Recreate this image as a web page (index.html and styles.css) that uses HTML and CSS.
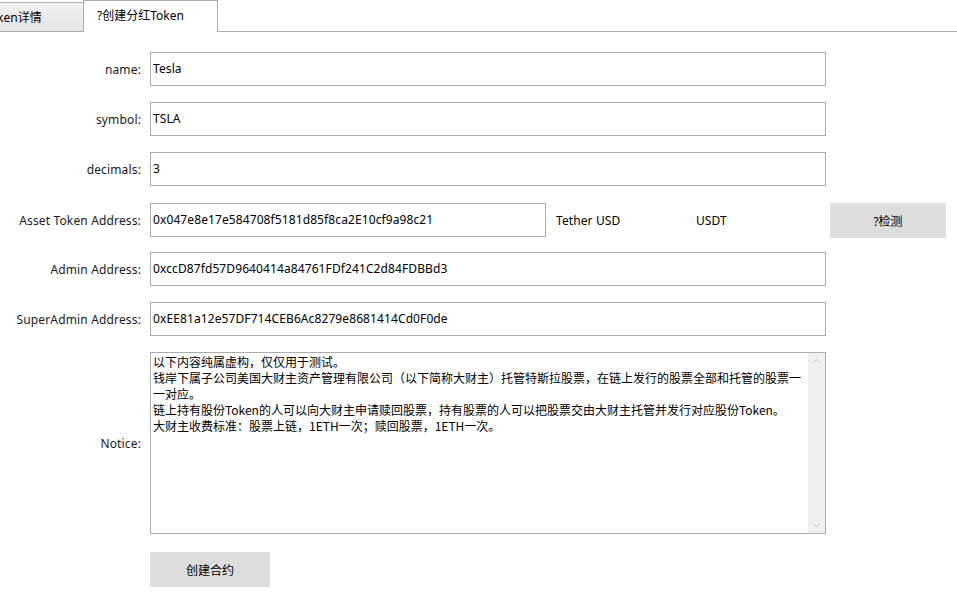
FILE: index.html
```html
<!DOCTYPE html>
<html lang="zh">
<head>
<meta charset="utf-8">
<title>创建分红Token</title>
<link rel="stylesheet" href="styles.css">
</head>
<body>
<div class="tabbar">
  <div class="tab tab-inactive">Token详情</div>
  <div class="tab tab-active">?创建分红Token</div>
  <div class="tab-rest"></div>
</div>
<div class="form">
  <div class="row">
    <label class="lbl">name:</label>
    <div class="field">Tesla</div>
  </div>
  <div class="row">
    <label class="lbl">symbol:</label>
    <div class="field">TSLA</div>
  </div>
  <div class="row">
    <label class="lbl">decimals:</label>
    <div class="field">3</div>
  </div>
  <div class="row">
    <label class="lbl">Asset Token Address:</label>
    <div class="asset">
      <div class="field field-short">0x047e8e17e584708f5181d85f8ca2E10cf9a98c21</div>
      <span class="info info-name">Tether USD</span>
      <span class="info info-sym">USDT</span>
      <button class="btn btn-check">?检测</button>
    </div>
  </div>
  <div class="row">
    <label class="lbl">Admin Address:</label>
    <div class="field">0xccD87fd57D9640414a84761FDf241C2d84FDBBd3</div>
  </div>
  <div class="row">
    <label class="lbl">SuperAdmin Address:</label>
    <div class="field">0xEE81a12e57DF714CEB6Ac8279e8681414Cd0F0de</div>
  </div>
  <div class="row row-notice">
    <label class="lbl">Notice:</label>
    <div class="notice">
      <div class="notice-text">以下内容纯属虚构，仅仅用于测试。
钱岸下属子公司美国大财主资产管理有限公司（以下简称大财主）托管特斯拉股票，在链上发行的股票全部和托管的股票一一对应。
链上持有股份Token的人可以向大财主申请赎回股票，持有股票的人可以把股票交由大财主托管并发行对应股份Token。
大财主收费标准：股票上链，1ETH一次；赎回股票，1ETH一次。</div>
      <div class="scrollbar">
        <svg class="arrow" width="17" height="17" viewBox="0 0 17 17"><path d="M5 10 L8.5 6.5 L12 10" fill="none" stroke="#c8c8c8" stroke-width="1"/></svg>
        <svg class="arrow" width="17" height="17" viewBox="0 0 17 17"><path d="M5 7 L8.5 10.5 L12 7" fill="none" stroke="#c8c8c8" stroke-width="1"/></svg>
      </div>
    </div>
  </div>
  <div class="row row-submit">
    <span></span>
    <button class="btn btn-create">创建合约</button>
  </div>
</div>
</body>
</html>
```

FILE: styles.css
```css
html, body {
  margin: 0;
  padding: 0;
  background: #ffffff;
}
body {
  width: 957px;
  height: 610px;
  overflow: hidden;
  font-family: "Noto Sans", "Noto Sans CJK SC", sans-serif;
  font-size: 12px;
  color: #000000;
}
.tabbar {
  display: flex;
  align-items: flex-end;
  height: 32px;
}
.tab {
  box-sizing: border-box;
  line-height: 28px;
  white-space: nowrap;
}
.tab-inactive {
  margin-left: -30px;
  width: 114px;
  height: 30px;
  padding-left: 13px;
  background: linear-gradient(#f2f2f2, #e3e3e3);
  border: 1px solid #acacac;
  line-height: 28px;
  padding-top: 1px;
}
.tab-active {
  width: 135px;
  height: 32px;
  padding-left: 13px;
  padding-top: 1px;
  background: #ffffff;
  border: 1px solid #acacac;
  border-bottom: none;
  line-height: 28px;
  margin-left: -1px;
}
.tab-rest {
  flex: 1;
  height: 1px;
  border-bottom: 1px solid #acacac;
  box-sizing: border-box;
}
.form {
  display: flex;
  flex-direction: column;
  gap: 16px;
  padding-top: 20px;
}
.row {
  display: grid;
  grid-template-columns: 141px 676px;
  column-gap: 9px;
  align-items: center;
  height: 34px;
}
.lbl {
  text-align: right;
  white-space: nowrap;
  color: #1a1a1a;
  letter-spacing: 0.15px;
}
.field {
  box-sizing: border-box;
  height: 34px;
  border: 1px solid #acacac;
  padding-left: 2px;
  line-height: 32px;
  white-space: nowrap;
  overflow: hidden;
  letter-spacing: 0.1px;
}
.asset {
  display: flex;
  align-items: center;
  width: 797px;
}
.field-short {
  width: 396px;
  flex: none;
}
.info {
  white-space: nowrap;
  letter-spacing: 0.1px;
}
.info-name {
  margin-left: 10px;
  width: 140px;
}
.info-sym {
  width: 134px;
}
.btn {
  border: none;
  background: #dddddd;
  font-family: inherit;
  font-size: 12px;
  color: #000000;
  padding: 0;
  cursor: pointer;
}
.btn-check {
  width: 116px;
  height: 35px;
  margin-top: 1px;
}
.row-notice {
  height: 182px;
}
.notice {
  box-sizing: border-box;
  height: 182px;
  border: 1px solid #acacac;
  display: flex;
}
.notice-text {
  flex: 1;
  padding: 1px 0 0 2px;
  white-space: pre-wrap;
  line-height: 16px;
  font-family: "Noto Sans CJK SC", sans-serif;
  color: #000000;
}
.scrollbar {
  width: 17px;
  background: #f0f0f0;
  display: flex;
  flex-direction: column;
  justify-content: space-between;
}
.arrow {
  display: block;
}
.row-submit {
  height: 35px;
  margin-top: 2px;
}
.btn-create {
  width: 120px;
  height: 35px;
}
```
